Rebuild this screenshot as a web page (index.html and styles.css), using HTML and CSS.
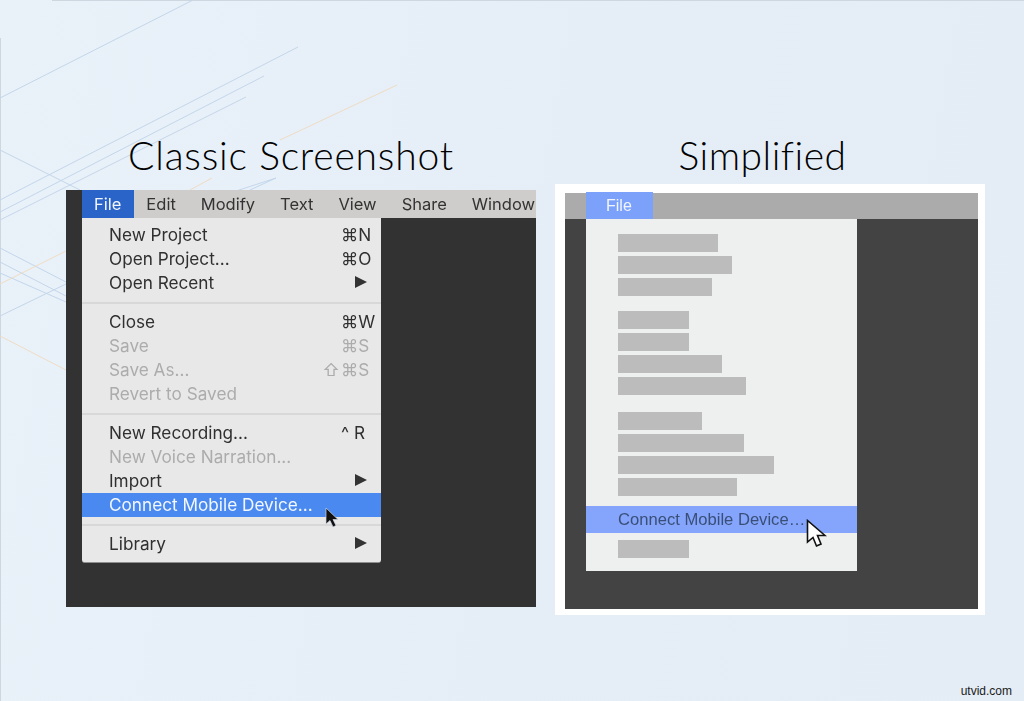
FILE: index.html
```html
<!DOCTYPE html>
<html>
<head>
  <title>Classic Screenshot vs Simplified</title>
  <meta name="viewport" content="width=device-width, initial-scale=1.0">
  <link rel="stylesheet" href="styles.css">
</head>
<body>
  <svg class="backdrop" width="1024" height="701" viewBox="0 0 1024 701">
    <path d="M52 .5H1024M.5 38V701" stroke="#ced6df" fill="none" stroke-width="1"/>
    <g stroke="#c3d6ea" fill="none" stroke-width="1">
      <path d="M0 98 193 0"/>
      <path d="M0 200 298 47"/>
      <path d="M0 212 264 76"/>
      <path d="M0 220 246 97"/>
      <path d="M190 206 276 178M250 190 276 178"/>
      <path d="M0 150 80 190"/>
      <path d="M0 248 66 282"/>
      <path d="M0 262 66 296"/>
      <path d="M0 316 66 284"/>
      <path d="M0 273 66 302"/>
    </g>
    <g stroke="#efdcc4" fill="none" stroke-width="1">
      <path d="M280 140 397 85"/>
      <path d="M190 190 212 178"/>
      <path d="M0 284 66 251"/>
      <path d="M0 336 66 370"/>
    </g>
  </svg>

  <div class="slide">
    <div class="col col-classic">
      <h1 class="title title-classic">Classic Screenshot</h1>
      <div class="app">
        <div class="menubar">
          <span class="tab">File</span>
          <span>Edit</span>
          <span>Modify</span>
          <span>Text</span>
          <span>View</span>
          <span>Share</span>
          <span>Window</span>
        </div>
        <div class="menu">
          <div class="item">New Project<span class="key">⌘N</span></div>
          <div class="item">Open Project...<span class="key">⌘O</span></div>
          <div class="item">Open Recent<span class="arrow"></span></div>
          <div class="sep"></div>
          <div class="item">Close<span class="key">⌘W</span></div>
          <div class="item off">Save<span class="key">⌘S</span></div>
          <div class="item off">Save As...<span class="key"><span class="shift">⇧</span>⌘S</span></div>
          <div class="item off">Revert to Saved</div>
          <div class="sep"></div>
          <div class="item">New Recording...<span class="key">^ R</span></div>
          <div class="item off">New Voice Narration...</div>
          <div class="item">Import<span class="arrow"></span></div>
          <div class="item active">Connect Mobile Device...
            <svg class="cursor cursor-black" width="15" height="22" viewBox="0 0 15 22">
              <path d="M1 1V17L5 13.5 8 20 11 18.5 8 12.5H13Z" fill="#111" stroke="#cfd6e4" stroke-width=".7"/>
            </svg>
          </div>
          <div class="sep"></div>
          <div class="item">Library<span class="arrow"></span></div>
        </div>
      </div>
    </div>

    <div class="col col-simple">
      <h1 class="title title-simple">Simplified</h1>
      <div class="frame">
        <div class="simple-app">
          <div class="simple-bar"><span class="simple-tab">File</span></div>
          <div class="simple-menu">
            <div class="group">
              <div class="bar w100"></div>
              <div class="bar w114"></div>
              <div class="bar w94"></div>
            </div>
            <div class="group">
              <div class="bar w71"></div>
              <div class="bar w71"></div>
              <div class="bar w104"></div>
              <div class="bar w128"></div>
            </div>
            <div class="group">
              <div class="bar w84"></div>
              <div class="bar w126"></div>
              <div class="bar w156"></div>
              <div class="bar w119"></div>
            </div>
            <div class="simple-active">Connect Mobile Device…
              <svg class="cursor cursor-white" width="21" height="29" viewBox="0 0 21 29">
                <path d="M1.500 1.500V23L7 18.500 10.500 27 15 25 11.500 16.500H19Z" fill="#fff" stroke="#111" stroke-width="1.600"/>
              </svg>
            </div>
            <div class="bar w71 last"></div>
          </div>
        </div>
      </div>
    </div>
  </div>

  <div class="watermark">utvid.com</div>
</body>
</html>
```

FILE: styles.css
```css
body {
  margin: 0;
  width: 1024px;
  height: 701px;
  overflow: hidden;
  position: relative;
  background: linear-gradient(100deg, #e9f1f9 0%, #e5eef7 55%, #e4edf6 100%);
  font-family: "Liberation Sans", Arial, sans-serif;
}

.backdrop {
  position: absolute;
  left: 0;
  top: 0;
}

.slide {
  position: relative;
  display: flex;
  gap: 19px;
  padding: 132px 0 0 66px;
}

.col {
  display: flex;
  flex-direction: column;
}
.col-classic {
  width: 470px;
}
.col-simple {
  width: 430px;
}

.title {
  margin: 0;
  font-family: Lato, sans-serif;
  font-weight: 300;
  font-size: 39px;
  line-height: 46px;
  color: #000;
  text-align: center;
}
.title-classic {
  height: 58px;
  letter-spacing: .8px;
  padding-right: 20px;
}
.title-simple {
  height: 52px;
  letter-spacing: .5px;
  padding-right: 15px;
}

/* left picture */
.app {
  height: 417px;
  background: #323232;
  padding-left: 16px;
  overflow: hidden;
  font-family: Inter, "DejaVu Sans", sans-serif;
  font-size: 17.200px;
  filter: blur(.35px);
}

.menubar {
  display: flex;
  gap: 25px;
  height: 28px;
  line-height: 28px;
  font-size: 16.500px;
  background: #cfcdcb;
  color: #333;
  white-space: nowrap;
}
.tab {
  background: #2a64c8;
  color: #f2f5fb;
  padding: 0 13px 0 12px;
  margin-right: -13px;
}

.menu {
  width: 299px;
  height: 345px;
  box-sizing: border-box;
  padding-top: 5px;
  background: #e8e8e8;
  border-bottom: 1px solid #8f8f8f;
  border-radius: 0 0 3px 3px;
}

.item {
  position: relative;
  display: flex;
  align-items: center;
  height: 24px;
  box-sizing: border-box;
  padding: 0 0 2px 27px;
  color: #303030;
  white-space: nowrap;
}
.item.off {
  color: #acacac;
}
.item.active {
  background: #4a8af0;
  color: #f3f7fe;
}

.key {
  position: absolute;
  left: 259px;
}
.shift {
  position: absolute;
  right: 100%;
  margin-right: 1px;
}

.arrow {
  position: absolute;
  left: 273px;
  top: 5px;
  border-left: 12px solid #333;
  border-top: 6px solid transparent;
  border-bottom: 6px solid transparent;
}

.sep {
  height: 2px;
  margin: 7px 0 6px;
  background: #d8d8d8;
}

.cursor {
  position: absolute;
}
.cursor-black {
  left: 243px;
  top: 14px;
}
.cursor-white {
  left: 220px;
  top: 13px;
}

/* right picture */
.frame {
  height: 431px;
  box-sizing: border-box;
  padding: 9px 7px 6px 10px;
  background: #fff;
}

.simple-app {
  height: 100%;
  background: #424342;
  filter: blur(.3px);
}

.simple-bar {
  height: 26px;
  background: #ababab;
  padding-left: 21px;
}
.simple-tab {
  display: block;
  position: relative;
  top: -1px;
  width: 67px;
  height: 27px;
  box-sizing: border-box;
  padding-left: 20px;
  line-height: 27px;
  font-size: 16px;
  color: #f2f5fc;
  background: #7ba1fb;
}

.simple-menu {
  width: 271px;
  height: 352px;
  box-sizing: border-box;
  margin-left: 21px;
  padding-top: 15px;
  background: #eef0f0;
}

.group {
  display: flex;
  flex-direction: column;
  gap: 4px;
  padding-left: 32px;
  margin-bottom: 15px;
}
.group + .group {
  margin-bottom: 0;
}
.group + .group + .group {
  margin-top: 17px;
}

.bar {
  height: 18px;
  background: #bcbcbc;
}
.bar.last {
  margin: 7px 0 0 32px;
}
.w71 { width: 71px; }
.w84 { width: 84px; }
.w94 { width: 94px; }
.w100 { width: 100px; }
.w104 { width: 104px; }
.w114 { width: 114px; }
.w119 { width: 119px; }
.w126 { width: 126px; }
.w128 { width: 128px; }
.w156 { width: 156px; }

.simple-active {
  position: relative;
  height: 27px;
  margin-top: 10px;
  padding-left: 32px;
  line-height: 27px;
  font-size: 16.600px;
  color: #3a4f78;
  background: #84a5fb;
  white-space: nowrap;
}

.watermark {
  position: absolute;
  right: 12px;
  bottom: 3px;
  font-size: 12px;
  line-height: 14px;
  color: #1a1a1a;
}
```
